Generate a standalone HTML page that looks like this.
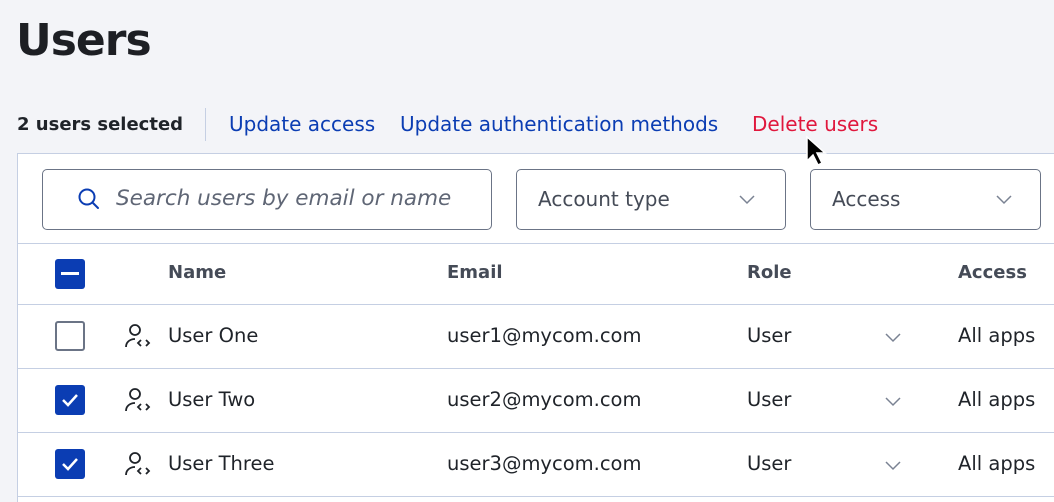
<!DOCTYPE html>
<html><head><style>
*{margin:0;padding:0;box-sizing:border-box}
html,body{width:1054px;height:502px;overflow:hidden}
body{background:#f3f4f8;font-family:"DejaVu Sans","Liberation Sans",sans-serif;position:relative;color:#1f2329}
.a{position:absolute;white-space:nowrap}
h1{position:absolute;left:16px;top:15px;font-size:44px;font-weight:bold;color:#1d1f24;letter-spacing:-1px;font-family:"DejaVu Sans",sans-serif}
.tb{top:112px;font-size:20px}
.link{color:#0b3db3}
.panel{position:absolute;left:17px;top:153px;width:1037px;height:349px;background:#fff;border-left:1px solid #c5cfe3;border-top:1px solid #c5cfe3}
.box{position:absolute;top:169px;height:61px;border:1px solid #6b7486;border-radius:5px;background:#fff}
.line{position:absolute;left:18px;width:1036px;height:1px;background:#c5cfe3}
.hd{font-size:18px;font-weight:bold;color:#454b57;top:262px}
.cell{font-size:19.5px;color:#1f2329}
.cb{position:absolute;left:55px;width:30px;height:30px;border-radius:3px}
.on{background:#0b3db3}
.off{border:2.5px solid #6b7486;background:#fff}
</style></head><body>
<h1>Users</h1>
<div class="a tb" style="left:17px;font-weight:bold;font-size:18px;color:#1f2329;top:114px">2 users selected</div>
<div class="a" style="left:205px;top:108px;width:1px;height:33px;background:#c5cfe3"></div>
<div class="a tb link" style="left:229px">Update access</div>
<div class="a tb link" style="left:400px">Update authentication methods</div>
<div class="a tb" style="left:752px;color:#e0173d">Delete users</div>
<div class="panel"></div>
<div class="box" style="left:42px;width:450px"></div>
<svg class="a" style="left:76px;top:186px" width="26" height="26" viewBox="0 0 26 26"><circle cx="11" cy="11" r="7.5" fill="none" stroke="#0b3db3" stroke-width="2"/><line x1="16.5" y1="16.5" x2="22" y2="22" stroke="#0b3db3" stroke-width="2" stroke-linecap="round"/></svg>
<div class="a" style="left:116px;top:186px;font-size:21.5px;font-style:italic;color:#5f6675">Search users by email or name</div>
<div class="box" style="left:516px;width:270px"></div>
<div class="a" style="left:538px;top:187px;font-size:20px;color:#454b57">Account type</div>
<div class="box" style="left:810px;width:231px"></div>
<div class="a" style="left:832px;top:187px;font-size:20px;color:#454b57">Access</div>
<svg class="a" style="left:738px;top:193px" width="18" height="12"><path d="M2 3l7 7 7-7" fill="none" stroke="#7a8293" stroke-width="1.5"/></svg>
<svg class="a" style="left:995px;top:193px" width="18" height="12"><path d="M2 3l7 7 7-7" fill="none" stroke="#7a8293" stroke-width="1.5"/></svg>
<div class="line" style="top:243px"></div>
<div class="cb on" style="top:259px"><div style="position:absolute;left:6px;top:13px;width:18px;height:3px;background:#fff"></div></div>
<div class="a hd" style="left:168px">Name</div>
<div class="a hd" style="left:447px">Email</div>
<div class="a hd" style="left:747px">Role</div>
<div class="a hd" style="left:958px">Access</div>
<div class="line" style="top:304px"></div>
<div class="line" style="top:368px"></div>
<div class="line" style="top:432px"></div>
<div class="line" style="top:496px"></div>

<div class="cb off" style="top:321px"></div>
<div class="cb on" style="top:385px"><svg width="30" height="30"><path d="M8 15l5 5 9-10" fill="none" stroke="#fff" stroke-width="2.5"/></svg></div>
<div class="cb on" style="top:449px"><svg width="30" height="30"><path d="M8 15l5 5 9-10" fill="none" stroke="#fff" stroke-width="2.5"/></svg></div>

<svg class="a" style="left:122px;top:322px" width="30" height="28"><circle cx="13" cy="8" r="5" fill="none" stroke="#1f2329" stroke-width="1.8"/><path d="M4 25c0-5 4-8 9-8" fill="none" stroke="#1f2329" stroke-width="1.8"/><path d="M19 18l-3 3 3 3M24 18l3 3-3 3" fill="none" stroke="#1f2329" stroke-width="1.8"/></svg>
<svg class="a" style="left:122px;top:386px" width="30" height="28"><circle cx="13" cy="8" r="5" fill="none" stroke="#1f2329" stroke-width="1.8"/><path d="M4 25c0-5 4-8 9-8" fill="none" stroke="#1f2329" stroke-width="1.8"/><path d="M19 18l-3 3 3 3M24 18l3 3-3 3" fill="none" stroke="#1f2329" stroke-width="1.8"/></svg>
<svg class="a" style="left:122px;top:450px" width="30" height="28"><circle cx="13" cy="8" r="5" fill="none" stroke="#1f2329" stroke-width="1.8"/><path d="M4 25c0-5 4-8 9-8" fill="none" stroke="#1f2329" stroke-width="1.8"/><path d="M19 18l-3 3 3 3M24 18l3 3-3 3" fill="none" stroke="#1f2329" stroke-width="1.8"/></svg>

<div class="a cell" style="left:168px;top:324px">User One</div>
<div class="a cell" style="left:447px;top:324px">user1@mycom.com</div>
<div class="a cell" style="left:747px;top:324px">User</div>
<div class="a cell" style="left:958px;top:324px">All apps</div>
<div class="a cell" style="left:168px;top:388px">User Two</div>
<div class="a cell" style="left:447px;top:388px">user2@mycom.com</div>
<div class="a cell" style="left:747px;top:388px">User</div>
<div class="a cell" style="left:958px;top:388px">All apps</div>
<div class="a cell" style="left:168px;top:452px">User Three</div>
<div class="a cell" style="left:447px;top:452px">user3@mycom.com</div>
<div class="a cell" style="left:747px;top:452px">User</div>
<div class="a cell" style="left:958px;top:452px">All apps</div>
<svg class="a" style="left:884px;top:331px" width="18" height="12"><path d="M2 3l7 7 7-7" fill="none" stroke="#7a8293" stroke-width="1.5"/></svg>
<svg class="a" style="left:884px;top:395px" width="18" height="12"><path d="M2 3l7 7 7-7" fill="none" stroke="#7a8293" stroke-width="1.5"/></svg>
<svg class="a" style="left:884px;top:459px" width="18" height="12"><path d="M2 3l7 7 7-7" fill="none" stroke="#7a8293" stroke-width="1.5"/></svg>

<svg class="a" style="left:805px;top:135px" width="24" height="34"><path d="M2 2v24l6-6 5 10 4-2-5-10h8z" fill="#000" stroke="#fff" stroke-width="1.5"/></svg>
</body></html>
